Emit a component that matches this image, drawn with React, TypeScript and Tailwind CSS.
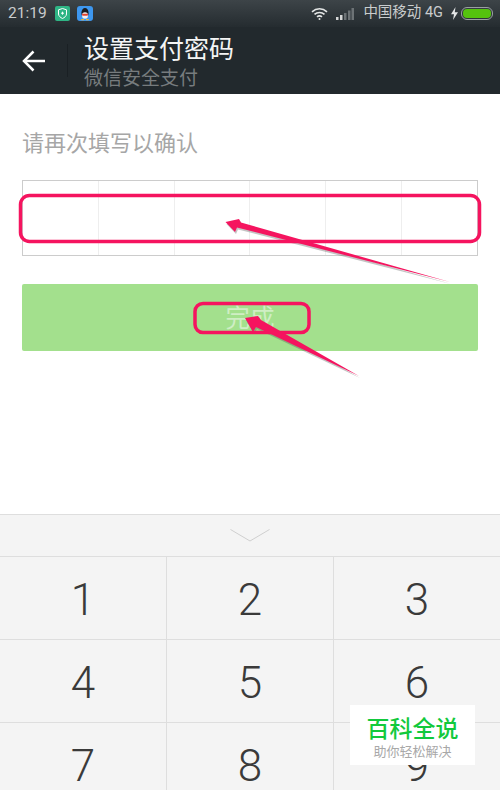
const cjk = { fontFamily: '"Roboto", "Noto Sans CJK SC", sans-serif' };
const arrowOne = "M450 282 L241 222.500 L239 219 L225.500 222 L235 232 L237 227.500 Z";
const arrowTwo = "M359 376 L261 320 L258 316 L245 318 L253 332 L256 327 Z";

const rows = [
  ["1", "2", "3"],
  ["4", "5", "6"],
  ["7", "8", "9"],
];

function StatusBar() {
  return (
    <div className="flex h-[27px] items-center bg-gradient-to-b from-[#3d4448] to-[#252c30] pl-2 pr-[7px] text-[#c9cccd]">
      <span className="text-[15.500px] leading-none">21:19</span>
      <div className="ml-[8px] flex h-[15px] w-[15px] items-center justify-center rounded-[2px] bg-[#2fb585]">
        <svg width="9" height="11" viewBox="0 0 9 11">
          <path d="M4.5 .5 L8.5 1.8 V6 C8.5 8 6.5 9.6 4.5 10.5 C2.500 9.600 .5 8 .5 6 V1.800 Z" fill="none" stroke="#fff" strokeWidth="1" />
          <path d="M3 5.200 H6 M4.500 3.700 V6.700" stroke="#fff" strokeWidth="1" />
        </svg>
      </div>
      <div className="ml-[7px] flex h-[15px] w-[16px] items-center justify-center rounded-[3px] bg-[#3d97ef]">
        <svg width="12" height="14" viewBox="0 0 12 14">
          <ellipse cx="6" cy="6" rx="3.600" ry="5" fill="#1c1c1e" />
          <ellipse cx="6" cy="8.500" rx="3" ry="3.200" fill="#f2f2f2" />
          <path d="M2.800 6.700 H9.200 L8.600 8.800 H3.400 Z" fill="#e2432f" />
          <path d="M2.200 12 H5 V13.200 H2.200 Z M7 12 H9.800 V13.200 H7 Z" fill="#efb02f" />
        </svg>
      </div>
      <div className="ml-auto flex items-center">
        <svg width="17" height="14" viewBox="0 0 17 14" fill="none" stroke="#e4e6e6" strokeWidth="1.600">
          <path d="M1 4.800 C5.400 .8 11.600 .8 16 4.800" />
          <path d="M3.500 7.300 C6.300 4.800 10.700 4.800 13.500 7.300" />
          <path d="M6 9.800 C7.400 8.700 9.600 8.700 11 9.800" />
          <circle cx="8.500" cy="12" r="1" fill="#e4e6e6" stroke="none" />
        </svg>
        <svg className="ml-[8px]" width="18" height="12" viewBox="0 0 18 12">
          <rect x="0" y="9" width="2.500" height="3" fill="#d5d7d7" />
          <rect x="4" y="7" width="2.500" height="5" fill="#d5d7d7" />
          <rect x="8" y="5" width="2.500" height="7" fill="#6d7376" />
          <rect x="12" y="2.500" width="2.500" height="9.500" fill="#6d7376" />
          <rect x="15.500" y="0" width="2.500" height="12" fill="#6d7376" />
        </svg>
        <span className="ml-[9px] text-[14.500px] leading-none" style={cjk}>
          中国移动 4G
        </span>
        <svg className="ml-[8px]" width="7" height="13" viewBox="0 0 7 13">
          <path d="M4.500 0 L0 7.200 H3 L2 13 L7 5.200 H3.800 Z" fill="#e4e6e6" />
        </svg>
        <div className="ml-[3px] flex h-[13px] w-[32px] items-center rounded-[6px] border border-[#9a9fa1] p-px">
          <div className="h-full w-full rounded-[4px] bg-[#55c20e]" />
        </div>
      </div>
    </div>
  );
}

function Header() {
  return (
    <div className="flex h-[67px] items-center bg-[#22292d]">
      <div className="flex w-[67px] items-center justify-center">
        <svg width="24" height="22" viewBox="0 0 24 22" fill="none" stroke="#fff" strokeWidth="2.500">
          <path d="M23 11 H2" />
          <path d="M11.500 1.500 L2 11 L11.500 20.500" />
        </svg>
      </div>
      <div className="h-[33px] w-px bg-[#1a2024]" />
      <div className="ml-[16px] mt-[5px] flex flex-col" style={cjk}>
        <span className="text-[25px] leading-[30px] text-[#f4f5f5]">设置支付密码</span>
        <span className="text-[19px] leading-[27px] text-[#777c7e]">微信安全支付</span>
      </div>
    </div>
  );
}

function Keyboard() {
  return (
    <div className="flex flex-col border-t border-[#dedede] bg-[#f4f4f4]">
      <div className="flex h-[42px] items-center justify-center border-b border-[#dedede]">
        <svg width="40" height="13" viewBox="0 0 40 13" fill="none" stroke="#cfcfcf" strokeWidth="1">
          <path d="M.5 .5 L20 12 L39.500 .5" />
        </svg>
      </div>
      {rows.map((row) => (
        <div key={row[0]} className="flex h-[83px] border-b border-[#dedede]">
          {row.map((n, i) => (
            <div
              key={n}
              className={`flex flex-1 items-center justify-center pt-[3px] text-[44px] font-light leading-none text-[#3a3a3a] ${
                i < 2 ? "border-r border-[#dedede]" : ""
              }`}
            >
              {n}
            </div>
          ))}
        </div>
      ))}
    </div>
  );
}

export default function App() {
  return (
    <div className="relative h-[790px] w-[500px] overflow-hidden bg-white" style={cjk}>
      <StatusBar />
      <Header />

      <div className="flex h-[420px] flex-col px-[22px]">
        <p className="mt-[36px] text-[22px] leading-[27px] text-[#a6a6a6]">请再次填写以确认</p>
        <div className="mt-[23px] flex h-[76px] border border-[#cccccc]">
          {[0, 1, 2, 3, 4, 5].map((i) => (
            <div key={i} className={`flex-1 ${i < 5 ? "border-r border-[#eeeeee]" : ""}`} />
          ))}
        </div>
        <div className="mt-[28px] flex h-[67px] items-center justify-center rounded-[2px] bg-[#a3e08d] pt-[3px] text-[24.500px] text-[#cfeec4]">
          完成
        </div>
      </div>

      <Keyboard />

      {/* annotations drawn on top of the screenshot */}
      <svg className="absolute left-0 top-0" width="500" height="790" viewBox="0 0 500 790" fill="none">
        <path d={arrowOne} fill="#555555" opacity=".35" transform="translate(1 2)" />
        <path d={arrowTwo} fill="#555555" opacity=".35" transform="translate(1 2)" />
        <rect x="20.500" y="195.500" width="459" height="46" rx="9" stroke="#f5145f" strokeWidth="3.500" />
        <rect x="195" y="303.500" width="114" height="29" rx="8" stroke="#f5145f" strokeWidth="3.500" />
        <path d={arrowOne} fill="#f5145f" />
        <path d={arrowTwo} fill="#f5145f" />
      </svg>

      <div className="absolute left-[350px] top-[705px] flex h-[60px] w-[125px] flex-col items-center bg-white pt-[11px]">
        <span className="text-[23px] font-medium leading-[27px] text-[#12c93c]">百科全说</span>
        <span className="text-[13px] leading-[18px] text-[#a8a8a8]">助你轻松解决</span>
      </div>
    </div>
  );
}
